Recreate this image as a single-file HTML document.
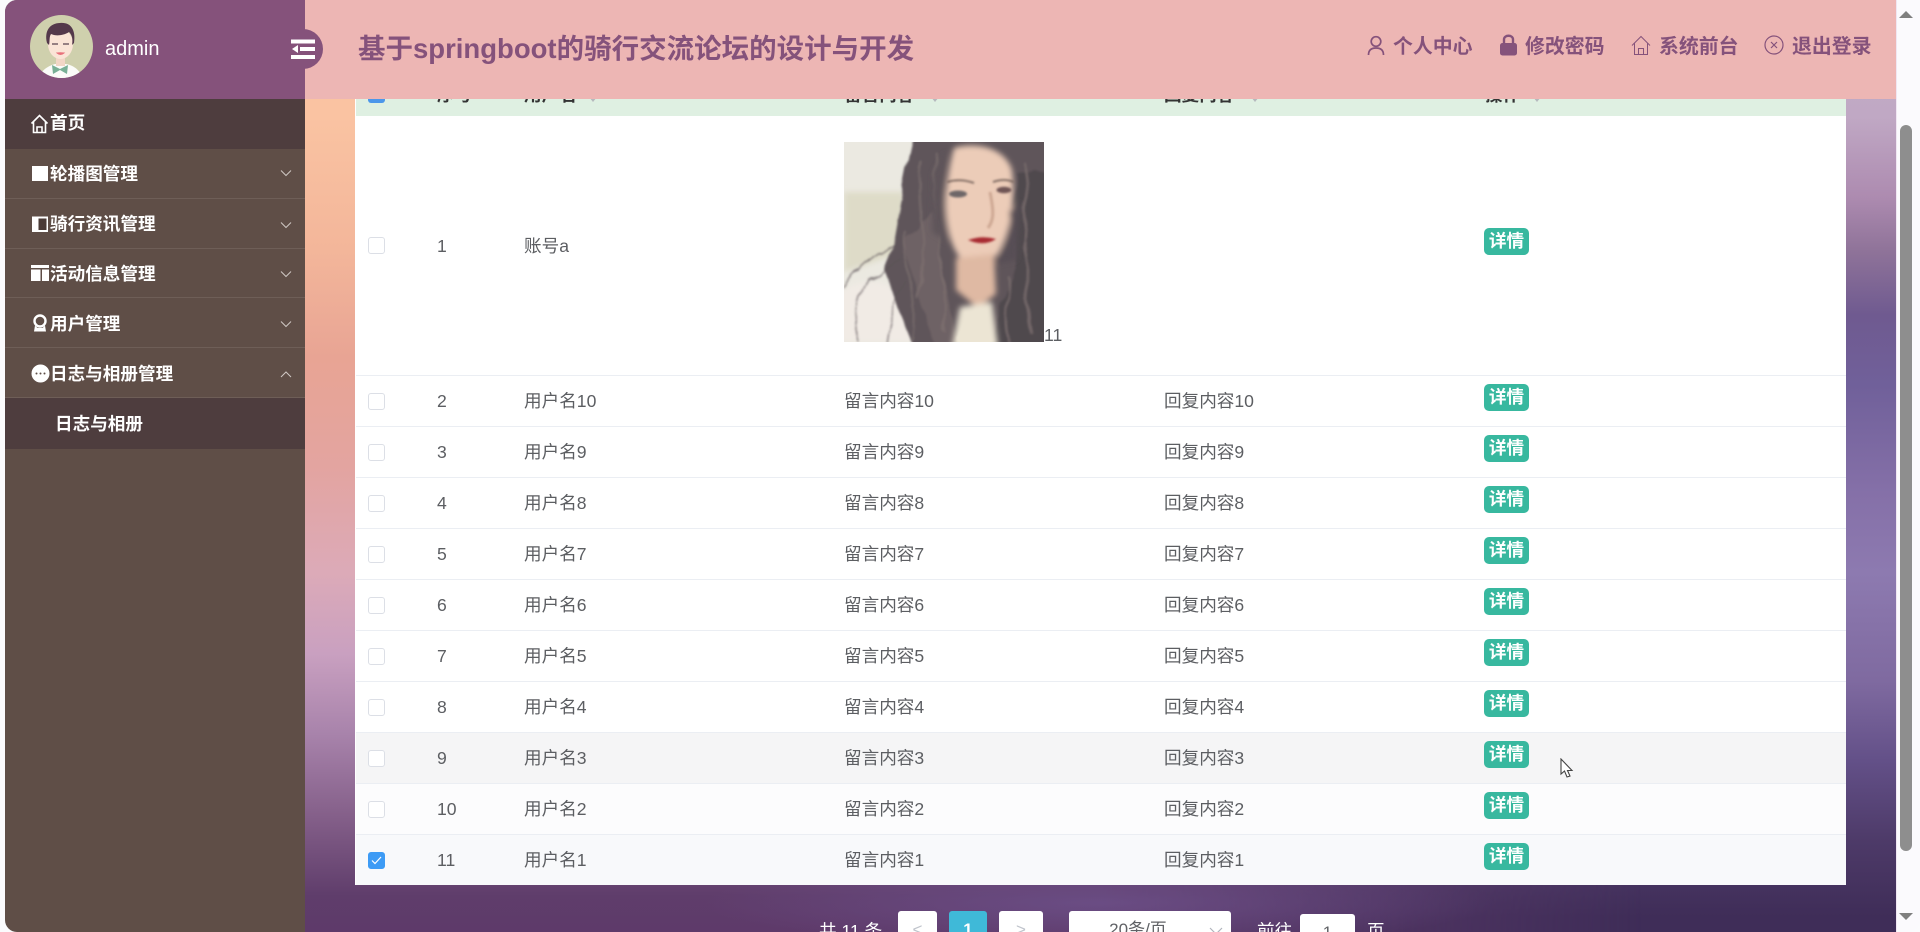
<!DOCTYPE html>
<html lang="zh-CN"><head><meta charset="utf-8"><title>论坛管理</title>
<style>
*{box-sizing:border-box}
html,body{margin:0;padding:0;width:1920px;height:932px;overflow:hidden;background:#fbfbfd}
body{font-family:"Liberation Sans","Noto Sans CJK SC",sans-serif;position:relative}
.abs,.r,.m,.c,.n{position:absolute}
#bg{left:305px;top:0;width:1591px;height:932px;background:linear-gradient(180deg,#c4aec8 0,#c0a8c4 117px,#ad8bb0 197px,#8f7399 251px,#6f5a90 315px,#70609a 385px,#8570a8 493px,#8d7ab0 573px,#7f6aa0 681px,#635088 761px,#4d3a68 842px,#3f2d58 917px,#3f2d58 932px)}
#bgl{left:305px;top:0;width:1591px;height:932px;background:linear-gradient(180deg,#fac3a2 0,#fac3a2 117px,#f3b69a 251px,#e8a494 358px,#e3a4a0 466px,#dcaab8 573px,#c9a0c0 654px,#a883ab 734px,#85608a 815px,#5f3d6b 896px,#5e3a6a 932px);-webkit-mask-image:linear-gradient(90deg,#000 0,#000 50%,transparent 84%);mask-image:linear-gradient(90deg,#000 0,#000 50%,transparent 84%)}
#bgm{left:700px;top:860px;width:800px;height:72px;background:radial-gradient(ellipse at 50% 60%,rgba(110,82,140,.75) 0,rgba(110,82,140,0) 70%)}
#tbl{left:356px;top:80px;width:1490px;height:805px;background:#fff;box-shadow:-1px 0 0 #fff;color:#5c5e62;font-size:17.6px;overflow:hidden}
.r{left:0;width:1490px;height:51px;border-bottom:1px solid #ebeef3;line-height:50px}
.c{top:0;white-space:nowrap}
.cb{position:absolute;left:12px;top:17px;width:17px;height:17px;border:1px solid #dcdfe6;border-radius:3px;background:#fff}
.btn{position:absolute;left:1128px;top:8px;width:45px;height:27px;background:#38b89f;border-radius:5px;color:#fff;font-weight:700;font-size:17.6px;line-height:26px;text-align:center}
#side{left:5px;top:0;width:300px;height:932px;background:#5f4e47;border-top-left-radius:12px;border-bottom-left-radius:12px;overflow:hidden}
#top{left:5px;top:0;width:300px;height:99px;background:#85527b;border-top-left-radius:12px}
.m{left:5px;width:300px;height:50px;border-bottom:1px solid #6e5e57;color:#fff;font-weight:700;font-size:17.6px;line-height:53px;padding-left:45px;white-space:nowrap}
.m svg.i{position:absolute;left:26px;top:15px}
.m svg.a{position:absolute;left:274px;top:22px}
#hd{left:305px;top:0;width:1591px;height:99px;background:#edb6b4}
.tl{color:#85527b;font-weight:700;font-size:19.9px;top:31px;line-height:32px;white-space:nowrap}
.pg{background:#fff;border-radius:3px;top:911px;height:40px;color:#c0c4cc;text-align:center;line-height:38px;font-size:17px}
.ptxt{color:#fff;font-size:17.6px;top:917px;line-height:28px;white-space:nowrap}
.car{position:absolute;top:17px;width:0;height:0;border:4px solid transparent;border-top:5px solid #b5b9bd}
</style></head><body>
<div class="abs" id="bg"></div><div class="abs" id="bgl"></div><div class="abs" id="bgm"></div>

<div class="abs" id="tbl">
 <div class="abs" style="left:0;top:0;width:1490px;height:36px;background:#dff0e2;color:#333;font-weight:700;line-height:30px">
  <div class="abs" style="left:12px;top:6px;width:17px;height:17px;background:#4c97ea;border-radius:3px"></div>
  <span class="c" style="left:81px">序号</span><span class="c" style="left:168px">用户名</span><span class="c" style="left:488px">留言内容</span><span class="c" style="left:808px">回复内容</span><span class="c" style="left:1129px">操作</span>
  <span class="car" style="left:233px"></span>
  <span class="car" style="left:575px"></span>
  <span class="car" style="left:895px"></span>
  <span class="car" style="left:1177px"></span>
 </div>
 <div class="r" style="top:36px;height:260px;line-height:260px">
  <div class="cb" style="top:121px"></div><span class="c" style="left:81px">1</span><span class="c" style="left:168px">账号a</span>
  <svg class="abs" style="left:488px;top:26px" width="200" height="200" viewBox="0 0 200 200">
   <defs>
    <filter id="w" x="-10%" y="-10%" width="120%" height="120%"><feTurbulence type="fractalNoise" baseFrequency="0.035 0.02" numOctaves="3" seed="7"/><feDisplacementMap in="SourceGraphic" scale="16"/><feGaussianBlur stdDeviation="1"/></filter>
    <filter id="b1" x="-10%" y="-10%" width="120%" height="120%"><feGaussianBlur stdDeviation="3"/></filter>
    <filter id="b2" x="-20%" y="-20%" width="140%" height="140%"><feGaussianBlur stdDeviation="1"/></filter>
    <clipPath id="cp"><rect width="200" height="200"/></clipPath>
   </defs>
   <g clip-path="url(#cp)">
   <rect width="200" height="200" fill="#ebe9e1"/>
   <g filter="url(#b1)">
    <path d="M0 50H60V110L0 130Z" fill="#dedbc8"/>
    <path d="M-5 150C30 130 60 135 80 200H-5Z" fill="#f1ebe5"/>
    <path d="M192 0H205V12H192Z" fill="#ffffff"/>
   </g>
   <g filter="url(#w)">
    <path d="M70 -8H205V205H150L132 165 108 205H70L52 160 38 125 50 95C58 50 62 25 70 -8Z" fill="#5e555a"/>
    <path d="M172 30H205V205H146L170 120Z" fill="#4f484d"/>
    <path d="M60 100C70 130 80 165 92 205H115C105 160 98 120 90 70Z" fill="#6e6265"/>
    <g fill="none" stroke="#7d7070" stroke-width="2.2" opacity=".8">
     <path d="M78 20C70 70 90 110 76 160"/><path d="M92 10C84 60 106 120 100 190"/><path d="M62 90C58 120 78 150 70 200"/><path d="M180 20C192 70 172 120 186 190"/><path d="M160 130C172 150 156 175 168 205"/>
    </g>
    <g fill="none" stroke="#5c5257" stroke-width="1.2" opacity=".8">
     <path d="M50 100C30 112 10 128 0 146"/><path d="M58 118C40 125 26 130 18 160 14 175 10 190 14 200"/><path d="M64 140C50 150 44 170 40 200"/>
    </g>
   </g>
   <g filter="url(#b1)">
    <path d="M110 6C130 0 160 4 168 28 172 60 166 92 154 112 142 124 128 126 118 118 104 104 100 70 102 50 104 34 106 20 110 6Z" fill="#ecccb8"/>
    <path d="M112 116L150 112 152 152 134 166 112 148Z" fill="#dfb9a3"/>
    <path d="M116 165L148 160 154 205H108Z" fill="#ece5d4"/>
    <path d="M102 10C98 40 98 70 104 100L88 90 90 30Z" fill="#5e555a"/>
    <path d="M165 70C170 90 160 108 150 122L172 118 176 60Z" fill="#574e54"/>
   </g>
   <g filter="url(#b2)">
    <ellipse cx="114" cy="52" rx="9" ry="3.5" fill="#6d6668"/>
    <ellipse cx="160" cy="48" rx="7.5" ry="3.2" fill="#6f5555"/>
    <path d="M103 40Q116 36 130 41M149 40Q160 36 170 40" stroke="#77645c" stroke-width="1.8" fill="none"/>
    <path d="M124 98Q138 93 152 97Q140 105 124 98Z" fill="#a82a30"/>
    <path d="M146 50C150 70 150 78 144 86" stroke="#b98f7a" stroke-width="3" fill="none" opacity=".6"/>
   </g></g>
  </svg>
  <span class="c" style="left:688px;top:205px;line-height:28px;height:28px">11</span>
  <div class="btn" style="top:112px">详情</div>
 </div>
 <div class="r" style="top:296px"><div class="cb"></div><span class="c" style="left:81px">2</span><span class="c" style="left:168px">用户名10</span><span class="c" style="left:488px">留言内容10</span><span class="c" style="left:808px">回复内容10</span><div class="btn">详情</div></div>
 <div class="r" style="top:347px"><div class="cb"></div><span class="c" style="left:81px">3</span><span class="c" style="left:168px">用户名9</span><span class="c" style="left:488px">留言内容9</span><span class="c" style="left:808px">回复内容9</span><div class="btn">详情</div></div>
 <div class="r" style="top:398px"><div class="cb"></div><span class="c" style="left:81px">4</span><span class="c" style="left:168px">用户名8</span><span class="c" style="left:488px">留言内容8</span><span class="c" style="left:808px">回复内容8</span><div class="btn">详情</div></div>
 <div class="r" style="top:449px"><div class="cb"></div><span class="c" style="left:81px">5</span><span class="c" style="left:168px">用户名7</span><span class="c" style="left:488px">留言内容7</span><span class="c" style="left:808px">回复内容7</span><div class="btn">详情</div></div>
 <div class="r" style="top:500px"><div class="cb"></div><span class="c" style="left:81px">6</span><span class="c" style="left:168px">用户名6</span><span class="c" style="left:488px">留言内容6</span><span class="c" style="left:808px">回复内容6</span><div class="btn">详情</div></div>
 <div class="r" style="top:551px"><div class="cb"></div><span class="c" style="left:81px">7</span><span class="c" style="left:168px">用户名5</span><span class="c" style="left:488px">留言内容5</span><span class="c" style="left:808px">回复内容5</span><div class="btn">详情</div></div>
 <div class="r" style="top:602px"><div class="cb"></div><span class="c" style="left:81px">8</span><span class="c" style="left:168px">用户名4</span><span class="c" style="left:488px">留言内容4</span><span class="c" style="left:808px">回复内容4</span><div class="btn">详情</div></div>
 <div class="r" style="top:653px;background:#f5f5f6"><div class="cb"></div><span class="c" style="left:81px">9</span><span class="c" style="left:168px">用户名3</span><span class="c" style="left:488px">留言内容3</span><span class="c" style="left:808px">回复内容3</span><div class="btn">详情</div></div>
 <div class="r" style="top:704px;background:#fcfcfd"><div class="cb"></div><span class="c" style="left:81px">10</span><span class="c" style="left:168px">用户名2</span><span class="c" style="left:488px">留言内容2</span><span class="c" style="left:808px">回复内容2</span><div class="btn">详情</div></div>
 <div class="r" style="top:755px;height:50px;background:#f8f9fb;border-bottom:0"><div class="cb" style="background:#3d9bf5;border-color:#3d9bf5"><svg class="abs" style="left:2px;top:3px" width="11" height="9" viewBox="0 0 11 9"><path d="M1 4.5L4 7.5 10 1" stroke="#fff" stroke-width="1.2" fill="none"/></svg></div><span class="c" style="left:81px">11</span><span class="c" style="left:168px">用户名1</span><span class="c" style="left:488px">留言内容1</span><span class="c" style="left:808px">回复内容1</span><div class="btn">详情</div></div>
</div>

<svg class="abs" style="left:1559px;top:758px" width="16" height="22" viewBox="0 0 16 22"><path d="M2 1V16L5.5 13 8 19 11 18 8.5 12.5H13Z" fill="#fff" stroke="#444" stroke-width="1.1"/></svg>

<span class="abs ptxt" style="left:819px">共 11 条</span>
<div class="abs pg" style="left:898px;width:39px">&lt;</div>
<div class="abs pg" style="left:949px;width:38px;background:#3fb9d8;color:#fff;font-weight:700">1</div>
<div class="abs pg" style="left:999px;width:44px">&gt;</div>
<div class="abs pg" style="left:1069px;width:162px;color:#606266;padding-right:24px">20条/页<svg class="abs" style="left:140px;top:16px" width="14" height="9" viewBox="0 0 14 9"><path d="M1 1L7 7 13 1" stroke="#b0b4bc" stroke-width="1.2" fill="none"/></svg></div>
<span class="abs ptxt" style="left:1257px">前往</span>
<div class="abs pg" style="left:1300px;width:55px;top:914px;color:#606266">1</div>
<span class="abs ptxt" style="left:1367px">页</span>

<div class="abs" id="side"></div>
<div class="abs" id="top"></div>
<svg class="abs" style="left:30px;top:15px" width="63" height="63" viewBox="0 0 63 63">
 <defs><clipPath id="av"><circle cx="31.5" cy="31.5" r="31.5"/></clipPath></defs>
 <g clip-path="url(#av)">
  <rect width="63" height="63" fill="#cfd0ad"/>
  <path d="M9 63C11 54 21 50 25 49H36C42 50 50 54 52 63Z" fill="#fbfbf8"/>
  <rect x="26" y="40" width="9" height="11" fill="#f2d6c6"/>
  <path d="M22 50L30 54 38 50 37 59 30 55 23 59Z" fill="#79b096"/>
  <ellipse cx="30.5" cy="29" rx="12.5" ry="15" fill="#fae4d6"/>
  <path d="M17 28C14 16 20 8 30 8 41 7 46 15 44 28L42 30C43 24 42 20 39 17 33 21 25 21 21 19 19 22 20 26 19 30Z" fill="#54394b"/>
  <path d="M22 29H28M33 29H39" stroke="#5a4450" stroke-width="1.2"/>
  <path d="M27 38Q30.5 41 34 38Q30.5 37.5 27 38Z" fill="#e8707a" stroke="#e8707a"/>
 </g>
</svg>
<span class="abs" style="left:105px;top:33px;color:#fff;font-size:20px;line-height:32px">admin</span>

<div class="abs" id="hd"></div>
<div class="abs" style="left:283px;top:29px;width:40px;height:40px;border-radius:50%;background:#85527b"></div>
<svg class="abs" style="left:291px;top:38px" width="24" height="22" viewBox="0 0 24 22"><path d="M0 1.5H24V5.5H0ZM9 9H24V13H9ZM0 17H24V21H0Z" fill="#fff"/><path d="M7 7V15L1 11Z" fill="#fff"/></svg>
<div class="abs" style="left:358px;top:31px;color:#85527b;font-weight:700;font-size:27.5px;line-height:36px;white-space:nowrap">基于springboot的骑行交流论坛的设计与开发</div>

<svg class="abs" style="left:1367px;top:35px" width="18" height="22" viewBox="0 0 18 22"><circle cx="9" cy="6.5" r="4.8" fill="none" stroke="#85527b" stroke-width="1.7"/><path d="M1.5 20C1.5 15 4.5 13 9 13S16.5 15 16.5 20" fill="none" stroke="#85527b" stroke-width="1.7"/></svg>
<span class="abs tl" style="left:1393px">个人中心</span>
<svg class="abs" style="left:1499px;top:33px" width="19" height="23" viewBox="0 0 19 23"><path d="M5 11V6.5C5 1.5 14 1.5 14 6.5V11" fill="none" stroke="#85527b" stroke-width="2.4"/><rect x="1" y="10" width="17" height="12.5" rx="2.5" fill="#85527b"/></svg>
<span class="abs tl" style="left:1525px">修改密码</span>
<svg class="abs" style="left:1631px;top:35px" width="20" height="21" viewBox="0 0 20 21"><path d="M1 10.5L10 1.5 19 10.5M3.5 8.5V19.5H16.5V8.5M7.5 19.5V13.5H12.5V19.5" fill="none" stroke="#85527b" stroke-width="1"/></svg>
<span class="abs tl" style="left:1659px">系统前台</span>
<svg class="abs" style="left:1764px;top:35px" width="20" height="20" viewBox="0 0 20 20"><circle cx="10" cy="10" r="9" fill="none" stroke="#85527b" stroke-width="1.2"/><path d="M7 7L13 13M13 7L7 13" stroke="#85527b" stroke-width="1.2"/></svg>
<span class="abs tl" style="left:1792px">退出登录</span>

<div class="m" style="top:99px;background:#4e3d3e;border-bottom:0;line-height:49px">
 <svg class="i" style="left:25px" width="19" height="20" viewBox="0 0 19 20"><path d="M1.5 9.5L9.5 1.5 17.5 9.5M3.5 8V18.5H15.5V8M7 18.5V13H12V18.5" fill="none" stroke="#fff" stroke-width="1.6"/></svg>首页</div>
<div class="m" style="top:149px;line-height:51px">
 <svg class="i" width="18" height="18" viewBox="0 0 18 18"><rect x="1" y="2" width="16" height="15" fill="#fff"/></svg>轮播图管理
 <svg class="a" style="top:20px" width="14" height="9" viewBox="0 0 14 9"><path d="M2 1.5L7 6.5 12 1.5" stroke="#cfc8c4" stroke-width="1" fill="none"/></svg></div>
<div class="m" style="top:199px;line-height:51px">
 <svg class="i" style="top:16px" width="18" height="18" viewBox="0 0 18 18"><path d="M1 1.5H17V17H1Z" fill="#fff"/><rect x="7.5" y="3.5" width="8" height="11.5" fill="#4a3a36"/></svg>骑行资讯管理
 <svg class="a" width="14" height="9" viewBox="0 0 14 9"><path d="M2 1.5L7 6.5 12 1.5" stroke="#cfc8c4" stroke-width="1" fill="none"/></svg></div>
<div class="m" style="top:248px">
 <svg class="i" style="top:16px" width="18" height="18" viewBox="0 0 18 18"><path d="M0 1H18V4H0ZM0 5.5H9.5V17H0ZM11 5.5H18V17H11Z" fill="#fff"/></svg>活动信息管理
 <svg class="a" width="14" height="9" viewBox="0 0 14 9"><path d="M2 1.5L7 6.5 12 1.5" stroke="#cfc8c4" stroke-width="1" fill="none"/></svg></div>
<div class="m" style="top:298px">
 <svg class="i" style="top:16px" width="18" height="19" viewBox="0 0 18 19"><circle cx="9" cy="7" r="5.5" fill="none" stroke="#fff" stroke-width="2.4"/><path d="M4 11.5L3 17.5H15L14 11.5 11.5 14H6.5Z" fill="#fff"/></svg>用户管理
 <svg class="a" width="14" height="9" viewBox="0 0 14 9"><path d="M2 1.5L7 6.5 12 1.5" stroke="#cfc8c4" stroke-width="1" fill="none"/></svg></div>
<div class="m" style="top:348px">
 <svg class="i" style="top:16px" width="19" height="19" viewBox="0 0 19 19"><circle cx="9.5" cy="9.5" r="9" fill="#fff"/><circle cx="5.5" cy="9.5" r="1" fill="#5e4d46"/><circle cx="9.5" cy="9.5" r="1" fill="#5e4d46"/><circle cx="13.5" cy="9.5" r="1" fill="#5e4d46"/></svg>日志与相册管理
 <svg class="a" width="14" height="9" viewBox="0 0 14 9"><path d="M2 7L7 2 12 7" stroke="#cfc8c4" stroke-width="1" fill="none"/></svg></div>
<div class="m" style="top:398px;height:51px;background:#4e3d3e;border-bottom:0;padding-left:50px;line-height:53px">日志与相册</div>

<div class="abs" style="left:1896px;top:0;width:24px;height:932px;background:#fbfafd;border-left:1px solid #f0e6f2;border-bottom-right-radius:12px"></div>
<div class="abs" style="left:1899px;top:11px;width:0;height:0;border-left:7px solid transparent;border-right:7px solid transparent;border-bottom:7px solid #7f7f7f"></div>
<div class="abs" style="left:1900px;top:125px;width:12px;height:726px;background:#8e8e8e;border-radius:6px"></div>
<div class="abs" style="left:1899px;top:913px;width:0;height:0;border-left:7px solid transparent;border-right:7px solid transparent;border-top:7px solid #7f7f7f"></div>
</body></html>
